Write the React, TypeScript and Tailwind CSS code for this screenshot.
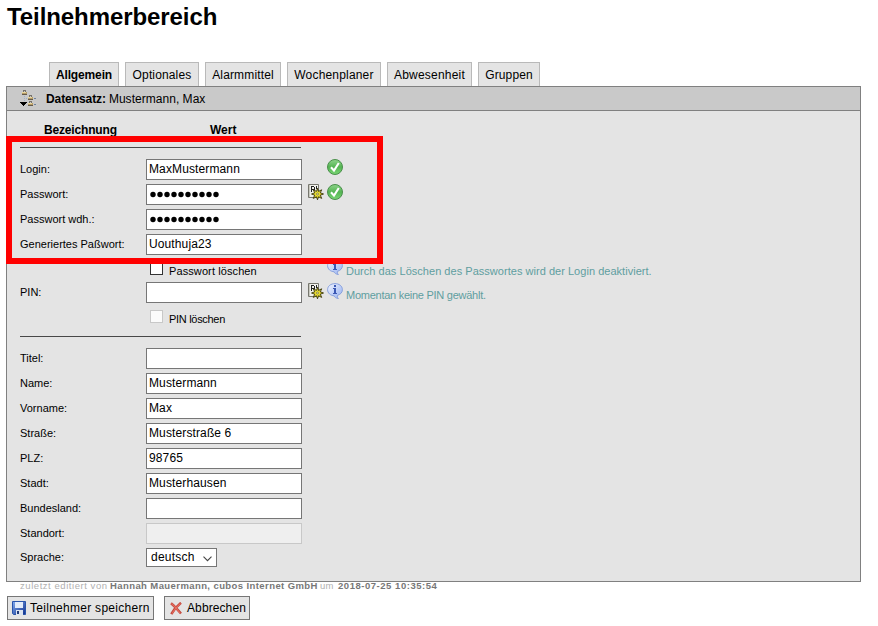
import React from "react";

const CheckIcon = () => (
  <svg width="16" height="16" viewBox="0 0 16 16" className="block">
    <defs>
      <linearGradient id="ok" x1="0" y1="0" x2="0" y2="1">
        <stop offset="0" stopColor="#8ed48b" />
        <stop offset="0.5" stopColor="#55b553" />
        <stop offset="1" stopColor="#7ad675" />
      </linearGradient>
    </defs>
    <circle cx="8" cy="8" r="7.5" fill="url(#ok)" stroke="#4a8f4b" />
    <path d="M4 8.200 7 11.600 11.800 4" fill="none" stroke="#fff" strokeWidth="2.1" />
  </svg>
);

const GenerateIcon = () => (
  <svg width="16" height="16" viewBox="0 0 16 16" className="block">
    <path d="M.5.5h10v13H.5z" fill="#f1f1ec" stroke="#77776f" />
    <path d="M1 1h1v12H1z" fill="#c9c9c0" />
    <path d="M3 2h3v1H4v2h2V3h1v3H4v2H3zM8 2h1v3H8z" fill="#222" shapeRendering="crispEdges" />
    <g transform="translate(9.500 10)">
      <path
        d="M0-5.800 1-2.600 4.200-4.200 2.800-1.200 6 0 2.800 1.200 4.200 4.400 1 2.800 0 5.800-1 2.800-4.200 4.400-2.800 1.200-6 0-2.800-1.200-4.200-4.200-1-2.600z"
        fill="#ddd02a"
        stroke="#37340a"
        strokeWidth=".9"
      />
      <circle r="2.300" fill="#ece13c" />
      <circle r="1" fill="#f4f1d8" stroke="#5b560c" strokeWidth=".6" />
    </g>
  </svg>
);

const InfoIcon = () => (
  <svg width="16" height="16" viewBox="0 0 16 16" className="block">
    <defs>
      <linearGradient id="bubble" x1="0" y1="0" x2="1" y2="1">
        <stop offset="0" stopColor="#f2f6ff" />
        <stop offset="1" stopColor="#93aef0" />
      </linearGradient>
    </defs>
    <path
      d="M8 .6C3.900.6.6 3 .6 6.700c0 3.400 2.900 5.900 6.600 6.100.4 1.300 1.600 2.400 4.200 2.700-1-.8-1.200-1.800-.8-3.200 2.900-.8 4.800-2.900 4.800-5.600C15.400 3 12.100.6 8 .6z"
      fill="url(#bubble)"
      stroke="#88a0dc"
    />
    <path d="M7 2h2v2H7zM6 5h3v5h1v1H6v-1h1V6H6z" fill="#3b58b4" shapeRendering="crispEdges" />
  </svg>
);

const TreeIcon = () => (
  <svg width="18" height="18" viewBox="0 0 18 18" className="block" shapeRendering="crispEdges">
    <path d="M4 6h1v1H4zM4 8h1v1H4zM4 10h1v1H4zM6 8h1v1H6zM8 14h1v1H8z" fill="#9fb2c8" />
    {[[2, 0], [8, 5], [8, 11]].map(([x, y]) => (
      <g key={`${x}-${y}`}>
        <path d={`M${x + 1} ${y}h3v1h-3zM${x + 1} ${y + 1}h1v1h-1zM${x + 3} ${y + 1}h1v1h-1z`} fill="#77736b" />
        <path d={`M${x} ${y + 2}h5v3h-5z`} fill="#b39a68" />
        <path d={`M${x} ${y + 2}h4v1h-4z`} fill="#e9d69c" />
        <path d={`M${x} ${y + 4}h5v1h-5z`} fill="#665b4a" />
      </g>
    ))}
    <path d="M14 8h2v1h-2zM14 14h2v1h-2z" fill="#6f839c" />
    <path d="M0 12h7v1H6v1H5v1H4v1H3v-1H2v-1H1v-1H0z" fill="#000" />
  </svg>
);

const SaveIcon = () => (
  <svg width="14" height="14" viewBox="0 0 14 14" className="block">
    <defs>
      <linearGradient id="disk" x1="0" y1="0" x2="1" y2="1">
        <stop offset="0" stopColor="#86adf0" />
        <stop offset="1" stopColor="#0d2f8c" />
      </linearGradient>
    </defs>
    <path d="M.5.5h13v13h-12l-1-1z" fill="url(#disk)" stroke="#2a55ab" />
    <path d="M3 1h8v6H3z" fill="#e3ecfa" />
    <path d="M4 9h7v5H4z" fill="#dbe3ef" />
    <path d="M5 10h2v3H5z" fill="#203a78" />
  </svg>
);

const CancelIcon = () => (
  <svg width="12" height="13" viewBox="0 0 12 13" className="block">
    <path d="M1 1.200C4.500 4 8 8 11 11.500M11 .8C7 4 3.500 8 1.300 12.200" fill="none" stroke="#c2483d" strokeWidth="2.500" />
    <path d="M1.500 1.500C5 4.500 8 8 10 11M10.500 1.500C7 4.500 4 8 2 11.500" fill="none" stroke="#e46d5f" strokeWidth="1.100" />
  </svg>
);

const tabs = [
  { name: "Optionales", cls: "w-[74px] tracking-[0.14px]" },
  { name: "Alarmmittel", cls: "w-[76px] tracking-[0.14px]" },
  { name: "Wochenplaner", cls: "w-[94px] tracking-[0.18px]" },
  { name: "Abwesenheit", cls: "w-[85px] tracking-[0.2px]" },
  { name: "Gruppen", cls: "w-[62px] tracking-[0.14px]" },
];

function Row({ label, children }: { label: string; children?: React.ReactNode }) {
  return (
    <div className="flex h-[25px] items-start">
      <span className="w-[126px] text-[11px] leading-[21px]">{label}</span>
      {children}
    </div>
  );
}

function Field({ value = "", disabled = false, secret = false }: { value?: string; disabled?: boolean; secret?: boolean }) {
  return (
    <div
      className={`flex h-[21px] w-[156px] items-center border pl-[2px] text-[12px] leading-[19px] ${
        disabled ? "border-[#c8c8c8] bg-[#efefef]" : "border-[#767676] bg-white"
      }`}
    >
      {secret ? (
        <svg width="72" height="7" viewBox="0 0 72 7" className="block">
          {Array.from({ length: 10 }, (_, i) => (
            <circle key={i} cx={4 + i * 7} cy="3.500" r="2.700" />
          ))}
        </svg>
      ) : (
        <span className="tracking-[0.12px]">{value}</span>
      )}
    </div>
  );
}

const Rule = () => <div className="h-px w-[281px] bg-[#484848]" />;

export default function App() {
  return (
    <div className="h-[626px] w-[878px] overflow-hidden bg-white font-['Liberation_Sans',Arial,sans-serif] text-black whitespace-nowrap">
      <h1 className="h-[62px] pt-[2px] pl-[7px] text-[24px] leading-[30px] font-bold tracking-[-0.08px]">
        Teilnehmerbereich
      </h1>
      <nav className="flex h-[24px] gap-[6px] pl-[49px] text-[12px] leading-[24px]">
        <div className="w-[70px] border border-b-0 border-[#b9b9b9] bg-[#e4e4e4] text-center font-bold tracking-[-0.14px]">
          Allgemein
        </div>
        {tabs.map((t) => (
          <div key={t.name} className={`border border-b-0 border-[#b9b9b9] bg-[#e4e4e4] text-center ${t.cls}`}>
            {t.name}
          </div>
        ))}
      </nav>
      <main className="relative ml-[6px] h-[496px] w-[855px] border border-[#808080] bg-[#e4e4e4]">
        <header className="flex h-[24px] border-b border-[#808080] bg-[#c9c9c9] pl-[13px] text-[12px] leading-[24px]">
          <div className="w-[26px] pt-[3px]">
            <TreeIcon />
          </div>
          <b className="mr-[3px] tracking-[-0.08px]">Datensatz:</b>
          <span className="tracking-[0.03px]">Mustermann, Max</span>
        </header>
        <div className="pl-[13px]">
          <div className="flex h-[36px] pt-[11px] text-[12px] leading-[16px] font-bold">
            <span className="w-[166px] pl-[24px] tracking-[-0.17px]">Bezeichnung</span>
            <span className="pl-[24px]">Wert</span>
          </div>
          <Rule />
          <div className="h-[11px]" />
          <Row label="Login:">
            <Field value="MaxMustermann" />
            <span className="ml-[25px]"><CheckIcon /></span>
          </Row>
          <Row label="Passwort:">
            <Field secret />
            <span className="ml-[6px]"><GenerateIcon /></span>
            <span className="ml-[3px]"><CheckIcon /></span>
          </Row>
          <Row label="Passwort wdh.:">
            <Field secret />
          </Row>
          <Row label="Generiertes Paßwort:">
            <Field value="Uouthuja23" />
          </Row>
          <div className="flex h-[23px] pl-[130px] text-[11px] leading-[24px]">
            <span className="mt-[3px] mr-[6px] size-[13px] border border-[#333] bg-white" />
            <span className="w-[158px] tracking-[0.1px]">Passwort löschen</span>
            <InfoIcon />
            <span className="ml-[3px] tracking-[0.03px] text-[#5f9ea0]">
              Durch das Löschen des Passwortes wird der Login deaktiviert.
            </span>
          </div>
          <Row label="PIN:">
            <Field />
            <span className="mt-px ml-[6px]"><GenerateIcon /></span>
            <span className="mt-px ml-[3px]"><InfoIcon /></span>
            <span className="ml-[3px] text-[11px] leading-[26px] tracking-[-0.26px] text-[#5f9ea0]">
              Momentan keine PIN gewählt.
            </span>
          </Row>
          <div className="flex h-[29px] pl-[130px] text-[11px] leading-[24px]">
            <span className="mt-[3px] mr-[6px] size-[13px] border border-[#c8c8c8] bg-[#fbfbfb]" />
            <span className="tracking-[-0.3px]">PIN löschen</span>
          </div>
          <Rule />
          <div className="h-[11px]" />
          <Row label="Titel:"><Field /></Row>
          <Row label="Name:"><Field value="Mustermann" /></Row>
          <Row label="Vorname:"><Field value="Max" /></Row>
          <Row label="Straße:"><Field value="Musterstraße 6" /></Row>
          <Row label="PLZ:"><Field value="98765" /></Row>
          <Row label="Stadt:"><Field value="Musterhausen" /></Row>
          <Row label="Bundesland:"><Field /></Row>
          <Row label="Standort:"><Field disabled /></Row>
          <div className="flex items-start">
            <span className="w-[126px] text-[11px] leading-[19px]">Sprache:</span>
            <div className="flex h-[19px] w-[71px] items-center justify-between border border-[#767676] bg-white pr-[4px] pl-[4px] text-[12px] leading-[17px]">
              <span className="tracking-[0.25px]">deutsch</span>
              <svg width="9" height="6" viewBox="0 0 9 6" className="mt-[3px]">
                <path d="M.5.7l4 4 4-4" fill="none" stroke="#444" strokeWidth="1.100" />
              </svg>
            </div>
          </div>
        </div>
        <div className="absolute top-[49px] -left-px h-[128px] w-[377px] border-[6px] border-[#ff0000]" />
      </main>
      <p className="flex h-[14px] gap-[3px] pl-[20px] text-[9.5px] leading-[8px] text-[#b0b0b0]">
        <span className="w-[87px] tracking-[0.55px]">zuletzt editiert von</span>
        <b className="w-[207px] tracking-[0.41px] text-[#777]">Hannah Mauermann, cubos Internet GmbH</b>
        <span className="w-[15px] tracking-[0.3px]">um</span>
        <b className="tracking-[0.53px] text-[#777]">2018-07-25 10:35:54</b>
      </p>
      <div className="flex gap-[10px] pl-[7px] text-[12px] leading-[22px]">
        <div className="flex h-[24px] w-[147px] items-center border border-[#767676] bg-[#e4e4e4] pl-[4px]">
          <SaveIcon />
          <span className="ml-[4px] tracking-[0.28px]">Teilnehmer speichern</span>
        </div>
        <div className="flex h-[24px] w-[86px] items-center border border-[#767676] bg-[#e4e4e4] pl-[5px]">
          <CancelIcon />
          <span className="ml-[5px] tracking-[0.1px]">Abbrechen</span>
        </div>
      </div>
    </div>
  );
}
